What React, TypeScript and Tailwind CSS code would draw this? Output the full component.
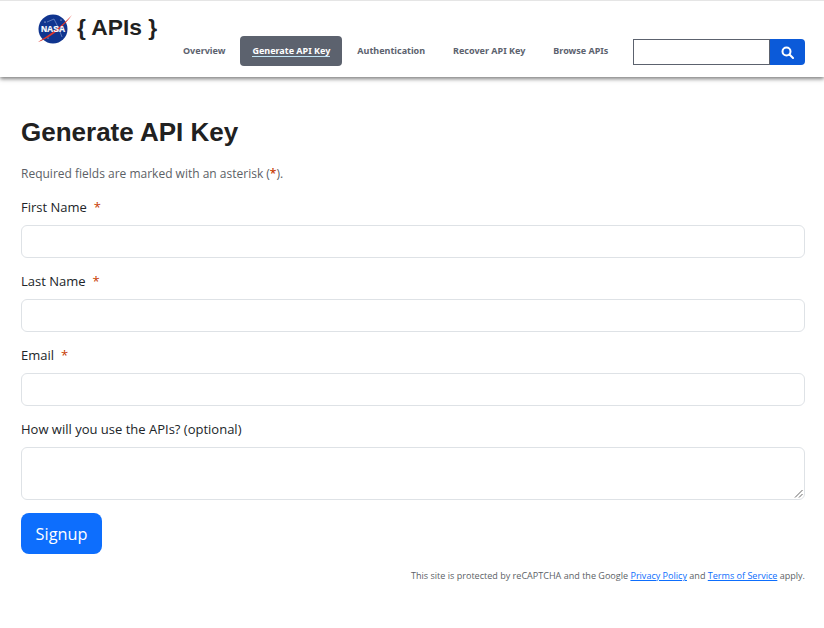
import React from "react";

const body = "font-['Open_Sans','Noto_Sans',sans-serif]";

function NasaLogo() {
  return (
    <svg width="36" height="32" viewBox="0 0 36 32" className="block">
      <circle cx="16" cy="16" r="14.5" fill="#10358f" />
      <path d="M10 9 L17 6 L22 16 L25 24" fill="none" stroke="#8fa6d8" strokeWidth="0.6" />
      <circle cx="8" cy="9" r="0.6" fill="#fff" />
      <circle cx="24" cy="7" r="0.5" fill="#fff" />
      <circle cx="11" cy="25" r="0.5" fill="#fff" />
      <path d="M1 29 C12 22 24 14 35 2 C28 12 16 23 4 28 Z" fill="#e0362c" />
      <text x="16" y="19" textAnchor="middle" fontFamily="'Liberation Sans',sans-serif" fontWeight="700" fontSize="8.5" fill="#fff" stroke="#fff" strokeWidth="0.2">NASA</text>
    </svg>
  );
}

function Field({ label, required, children, className = "h-[33px]" }: { label: string; required?: boolean; children?: React.ReactNode; className?: string }) {
  return (
    <div className="mb-[13px]">
      <label className="block text-[13px] leading-[20px] text-[#212529] mb-[8px]">
        {label}
        {required && <span className="text-[#c73a00] ml-[7px]">*</span>}
      </label>
      <div className={`${className} rounded-[6px] border border-[#dee2e6] bg-white`}>{children}</div>
    </div>
  );
}

function NavItem({ children, active }: { children: string; active?: boolean }) {
  return (
    <a className={active
      ? "h-[30px] mx-[1px] px-[12px] flex items-center rounded-[4px] bg-[#5c626e] text-white"
      : "h-[30px] px-[14px] flex items-center text-[#5c626e]"}>
      <span className={active ? "border-b border-[#bfe3f5] leading-[11px]" : ""}>{children}</span>
    </a>
  );
}

export default function App() {
  return (
    <div className={`w-[824px] h-[628px] bg-white overflow-hidden ${body}`}>
      <header className="h-[77px] border-t border-[#e5e5e5] bg-white shadow-[0_2px_4px_rgba(0,0,0,0.5)] flex relative">
        <div className="w-[182px] shrink-0 pl-[37px] pt-[12px] flex items-start">
          <NasaLogo />
          <span className="ml-[4px] text-[22.8px] leading-[30px] font-bold text-[#212121] font-['Liberation_Sans',sans-serif] whitespace-nowrap -mt-[1px]">{"{ APIs }"}</span>
        </div>
        <div className="flex items-start pt-[35px]">
          <nav className="flex items-center text-[9px] font-bold font-['Noto_Sans',sans-serif] whitespace-nowrap -ml-[13px] w-[636px]">
            <NavItem>Overview</NavItem>
            <NavItem active>Generate API Key</NavItem>
            <NavItem>Authentication</NavItem>
            <NavItem>Recover API Key</NavItem>
            <NavItem>Browse APIs</NavItem>
            <form className="ml-auto flex h-[26px] self-start mt-[3px]">
              <div className="w-[137px] border border-[#5c626e] bg-white" />
              <button type="button" className="w-[35px] bg-[#0b5ad9] rounded-r-[4px] flex items-center justify-center">
                <svg width="13" height="13" viewBox="0 0 13 13" fill="none" stroke="#fff" strokeWidth="2">
                  <circle cx="5.5" cy="5.5" r="4" />
                  <path d="M8.5 8.5 L12 12" strokeLinecap="round" />
                </svg>
              </button>
            </form>
          </nav>
        </div>
      </header>
      <main className="pl-[21px] pr-[19px]">
        <h1 className="mt-[37px] text-[26px] leading-[36px] font-bold text-[#212121] font-['Liberation_Sans',sans-serif]">Generate API Key</h1>
        <p className="mt-[14px] mb-[13px] text-[12px] leading-[20px] text-[#5c5f66]">
          Required fields are marked with an asterisk (<span className="text-[#c73a00] font-semibold">*</span>).
        </p>
        <Field label="First Name" required />
        <Field label="Last Name" required />
        <Field label="Email" required />
        <Field label="How will you use the APIs? (optional)" className="h-[53px] relative">
          <svg width="9" height="9" viewBox="0 0 9 9" className="absolute right-[1px] bottom-[1px]" stroke="#555" strokeWidth="0.9">
            <path d="M1 8.5 L8.5 1 M5 8.5 L8.5 5" />
          </svg>
        </Field>
        <button type="button" className="block w-[81px] h-[41px] pt-[1px] rounded-[8px] bg-[#0d6efd] text-white text-[16.3px]">Signup</button>
        <p className="mt-[15px] text-right text-[9.05px] leading-[14px] text-[#5c5f66]">
          This site is protected by reCAPTCHA and the Google <a className="text-[#0d6efd] underline">Privacy Policy</a> and <a className="text-[#0d6efd] underline">Terms of Service</a> apply.
        </p>
      </main>
    </div>
  );
}
